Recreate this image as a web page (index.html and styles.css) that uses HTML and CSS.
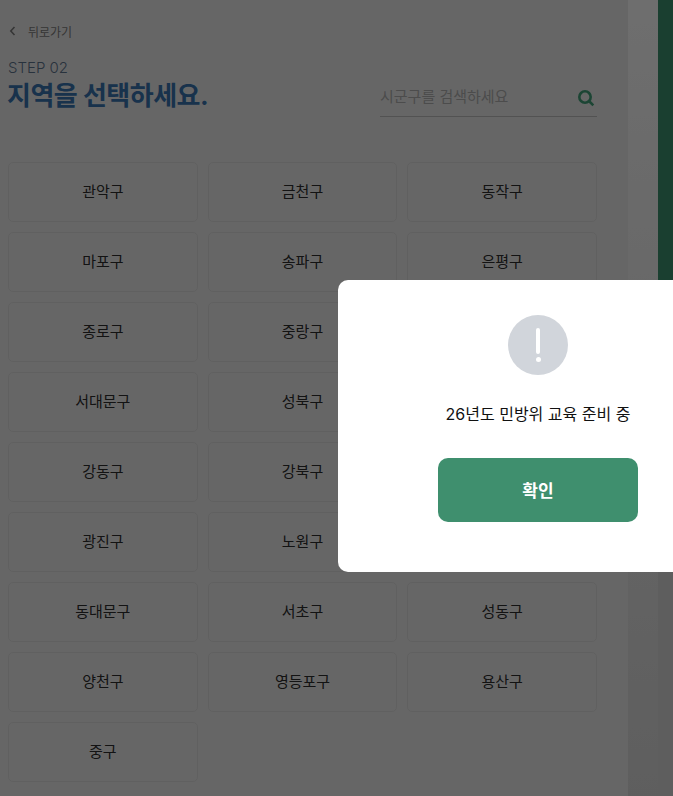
FILE: index.html
```html
<!DOCTYPE html>
<html lang="ko">
  <head>
    <meta charset="utf-8"/>
    <meta name="viewport" content="width=device-width, initial-scale=1"/>
    <title>지역 선택</title>
    <link rel="stylesheet" href="styles.css">
  </head>
  <body>
    <div class="page">
      <main class="panel">
        <a class="back" href="#">
          <svg class="back__icon" width="8" height="10" viewBox="0 0 8 10"><path d="M6.5 1 L2.8 5 L6.5 9" fill="none" stroke="#777" stroke-width="1.6"/></svg>
          <span>뒤로가기</span>
        </a>

        <div class="head">
          <div>
            <p class="head__step">STEP 02</p>
            <h1 class="head__title">지역을 선택하세요.</h1>
          </div>
          <div class="search">
            <span class="search__input">시군구를 검색하세요</span>
            <svg class="search__icon" width="18" height="18" viewBox="0 0 18 18"><circle cx="8" cy="8" r="5.7" fill="none" stroke="#3f9a74" stroke-width="2.6"/><path d="M12 12 L16.3 16.3" stroke="#3f9a74" stroke-width="2.6"/></svg>
          </div>
        </div>

        <div class="areas">
          <button type="button" class="areas__item">관악구</button>
          <button type="button" class="areas__item">금천구</button>
          <button type="button" class="areas__item">동작구</button>
          <button type="button" class="areas__item">마포구</button>
          <button type="button" class="areas__item">송파구</button>
          <button type="button" class="areas__item">은평구</button>
          <button type="button" class="areas__item">종로구</button>
          <button type="button" class="areas__item">중랑구</button>
          <button type="button" class="areas__item">강남구</button>
          <button type="button" class="areas__item">서대문구</button>
          <button type="button" class="areas__item">성북구</button>
          <button type="button" class="areas__item">구로구</button>
          <button type="button" class="areas__item">강동구</button>
          <button type="button" class="areas__item">강북구</button>
          <button type="button" class="areas__item">도봉구</button>
          <button type="button" class="areas__item">광진구</button>
          <button type="button" class="areas__item">노원구</button>
          <button type="button" class="areas__item">강서구</button>
          <button type="button" class="areas__item">동대문구</button>
          <button type="button" class="areas__item">서초구</button>
          <button type="button" class="areas__item">성동구</button>
          <button type="button" class="areas__item">양천구</button>
          <button type="button" class="areas__item">영등포구</button>
          <button type="button" class="areas__item">용산구</button>
          <button type="button" class="areas__item">중구</button>
        </div>
      </main>
      <div class="gutter"></div>
      <div class="sidebar"></div>
    </div>

    <div class="overlay"></div>

    <div class="dialog">
      <div class="dialog__icon"><span class="dialog__bar"></span><span class="dialog__dot"></span></div>
      <p class="dialog__text">26년도 민방위 교육 준비 중</p>
      <button type="button" class="dialog__button">확인</button>
    </div>
  </body>
</html>
```

FILE: styles.css
```css
* {
  box-sizing: border-box;
}

html, body {
  height: 100%;
}

body {
  margin: 0;
  overflow: hidden;
  font-family: 'Inter', 'Noto Sans CJK KR', sans-serif;
  color: #111;
}

.page {
  display: flex;
  height: 796px;
}

.panel {
  width: 628px;
  padding: 24px 31px 0 8px;
  background: #e3e3e3;
}

.gutter {
  width: 30px;
  background: linear-gradient(#f4f4f4, #d1d1d1);
}

.sidebar {
  flex: 1;
  background: linear-gradient(#3a8c6a 0, #3a8c6a 70%, #d1d1d1 70%);
}

.back {
  display: flex;
  align-items: center;
  gap: 12px;
  height: 14px;
  color: #777;
  font-size: 12px;
  text-decoration: none;
}

.head {
  display: flex;
  justify-content: space-between;
  align-items: flex-end;
  margin-top: 20px;
}

.head__step {
  margin: 0;
  color: #5a7088;
  font-size: 15px;
  font-weight: 300;
  line-height: 20px;
}

.head__title {
  margin: 0 0 0 -1px;
  color: #366fa8;
  font-size: 26px;
  font-weight: 700;
  line-height: 36px;
  letter-spacing: -0.5px;
}

.search {
  display: flex;
  justify-content: space-between;
  align-items: center;
  width: 217px;
  height: 33px;
  margin-bottom: -3px;
  padding: 0 2px 10px 0;
  border-bottom: 1px solid #b5b5b5;
}

.search__input {
  color: #a8a8a8;
  font-size: 15px;
}

.search__icon {
  margin-top: 5px;
}

.areas {
  display: grid;
  grid-template-columns: repeat(3, 1fr);
  gap: 10px;
  margin-top: 48px;
}

.areas__item {
  height: 60px;
  padding: 0 0 3px;
  background: #e3e3e3;
  border: 1px solid #d6d6d6;
  border-radius: 5px;
  color: #2a2a2a;
  font-family: inherit;
  font-size: 15px;
}

.overlay {
  position: fixed;
  top: 0;
  left: 0;
  width: 100%;
  height: 100%;
  background: rgba(0, 0, 0, 0.55);
}

.dialog {
  position: fixed;
  top: 280px;
  left: 338px;
  width: 400px;
  height: 292px;
  padding-top: 35px;
  display: flex;
  flex-direction: column;
  align-items: center;
  background: #fff;
  border-radius: 10px;
}

.dialog__icon {
  display: flex;
  flex-direction: column;
  align-items: center;
  width: 60px;
  height: 60px;
  padding-top: 13px;
  background: #d1d5db;
  border-radius: 50%;
}

.dialog__bar {
  width: 4px;
  height: 26px;
  background: #fff;
  border-radius: 2px;
}

.dialog__dot {
  width: 5px;
  height: 5px;
  margin-top: 3px;
  background: #fff;
  border-radius: 50%;
}

.dialog__text {
  margin: 27px 0 0;
  color: #111;
  font-size: 16px;
  line-height: 24px;
}

.dialog__button {
  width: 200px;
  height: 64px;
  margin-top: 32px;
  padding: 0 0 2px;
  background: #3f8f6e;
  border: 0;
  border-radius: 10px;
  color: #fff;
  font-family: inherit;
  font-size: 17px;
  font-weight: 700;
}
```
